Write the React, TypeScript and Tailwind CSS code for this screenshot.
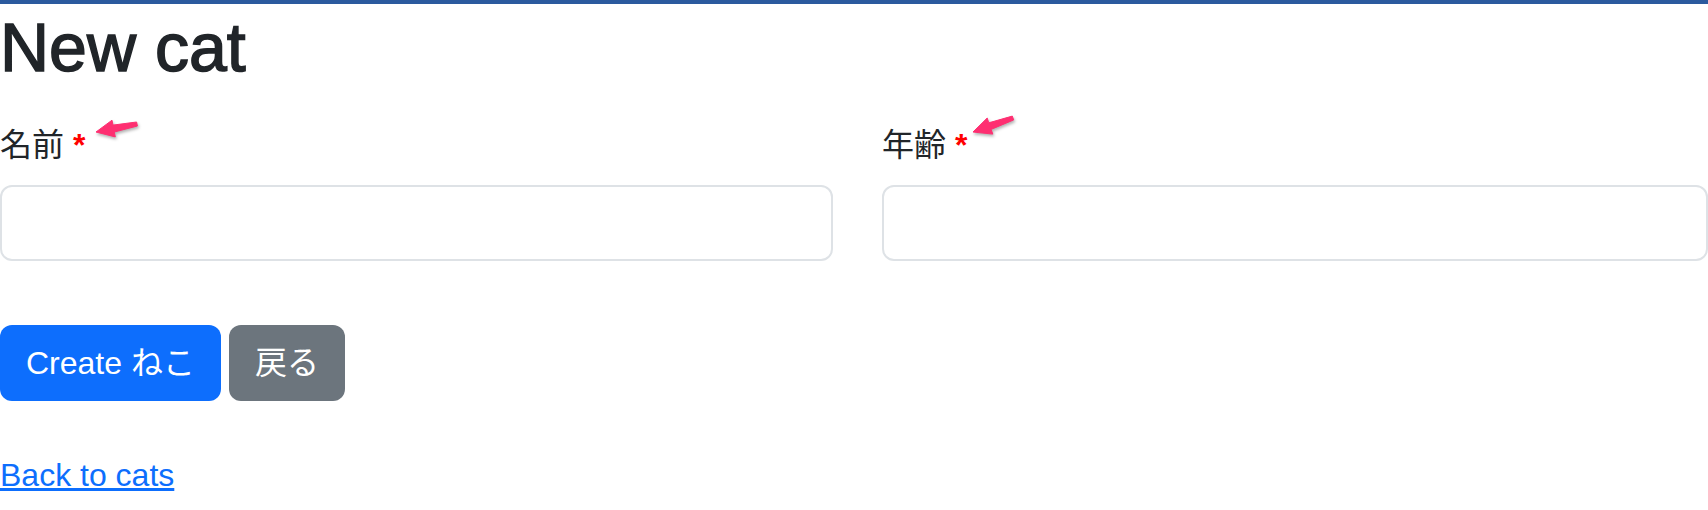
import React from "react";

// Skitch-style annotation arrow; tip sits at (pad, pad + |dy|) inside the svg
function Arrow({ dx, dy, className }: { dx: number; dy: number; className: string }) {
    const pad = 10;
    const len = Math.hypot(dx, dy);
    const ux = dx / len;
    const uy = dy / len;
    const px = -uy;
    const py = ux;
    const tx = pad;
    const ty = pad + Math.max(0, -dy);
    const head = 18;
    const hw = 8.5;
    const bx = tx + ux * head;
    const by = ty + uy * head;
    const pts = [
        [tx, ty],
        [bx + px * hw, by + py * hw],
        [bx + px * 3.5, by + py * 3.5],
        [tx + dx + px * 2, ty + dy + py * 2],
        [tx + dx - px * 2, ty + dy - py * 2],
        [bx - px * 3.5, by - py * 3.5],
        [bx - px * hw, by - py * hw],
    ]
        .map((p) => p.map((v) => v.toFixed(1)).join(","))
        .join(" ");
    return (
        <svg
            width={dx + pad * 2}
            height={Math.abs(dy) + pad * 2}
            className={`absolute drop-shadow-[1px_2px_1.5px_rgba(0,0,0,0.3)] ${className}`}
        >
            <polygon points={pts} fill="#fe2f71" strokeLinejoin="round" stroke="#fe2f71" strokeWidth="1" />
        </svg>
    );
}

function Field({ label, arrow }: { label: string; arrow: React.ReactNode }) {
    return (
        <div className="relative flex flex-col">
            <label className="mb-[16px] text-[32px] leading-[48px] text-[#212529]">
                {label} <span className="font-bold text-[#ff0000]">*</span>
            </label>
            {arrow}
            <input
                type="text"
                className="h-[76px] w-full rounded-[12px] border-[2px] border-[#dee2e6] bg-white px-6 text-[32px] outline-none"
            />
        </div>
    );
}

export default function App() {
    return (
        <div className="min-h-screen bg-white font-['Liberation_Sans','Noto_Sans_CJK_JP',sans-serif] text-[#212529]">
            <div className="h-[4px] bg-[#2b5a9e]" />
            <h1 className="mt-[2px] text-[68px] leading-[82px] [-webkit-text-stroke:1.5px_#212529]">New cat</h1>

            <form className="mt-[33px]">
                <div className="grid grid-cols-[833px_1fr] gap-x-[49px]">
                    <Field label="名前" arrow={<Arrow dx={41} dy={-8} className="left-[86px] top-[-7px]" />} />
                    <Field label="年齢" arrow={<Arrow dx={40} dy={-14} className="left-[81px] top-[-13px]" />} />
                </div>

                <div className="mt-[64px] flex gap-[8px]">
                    <button
                        type="submit"
                        className="h-[76px] rounded-[12px] bg-[#0d6efd] px-[26px] text-[32px] text-white"
                    >
                        Create ねこ
                    </button>
                    <button
                        type="button"
                        className="h-[76px] rounded-[12px] bg-[#6c757d] px-[26px] text-[32px] text-white"
                    >
                        戻る
                    </button>
                </div>
            </form>

            <a href="#" className="mt-[50px] inline-block text-[32px] leading-[48px] text-[#0d6efd] underline">
                Back to cats
            </a>
        </div>
    );
}
